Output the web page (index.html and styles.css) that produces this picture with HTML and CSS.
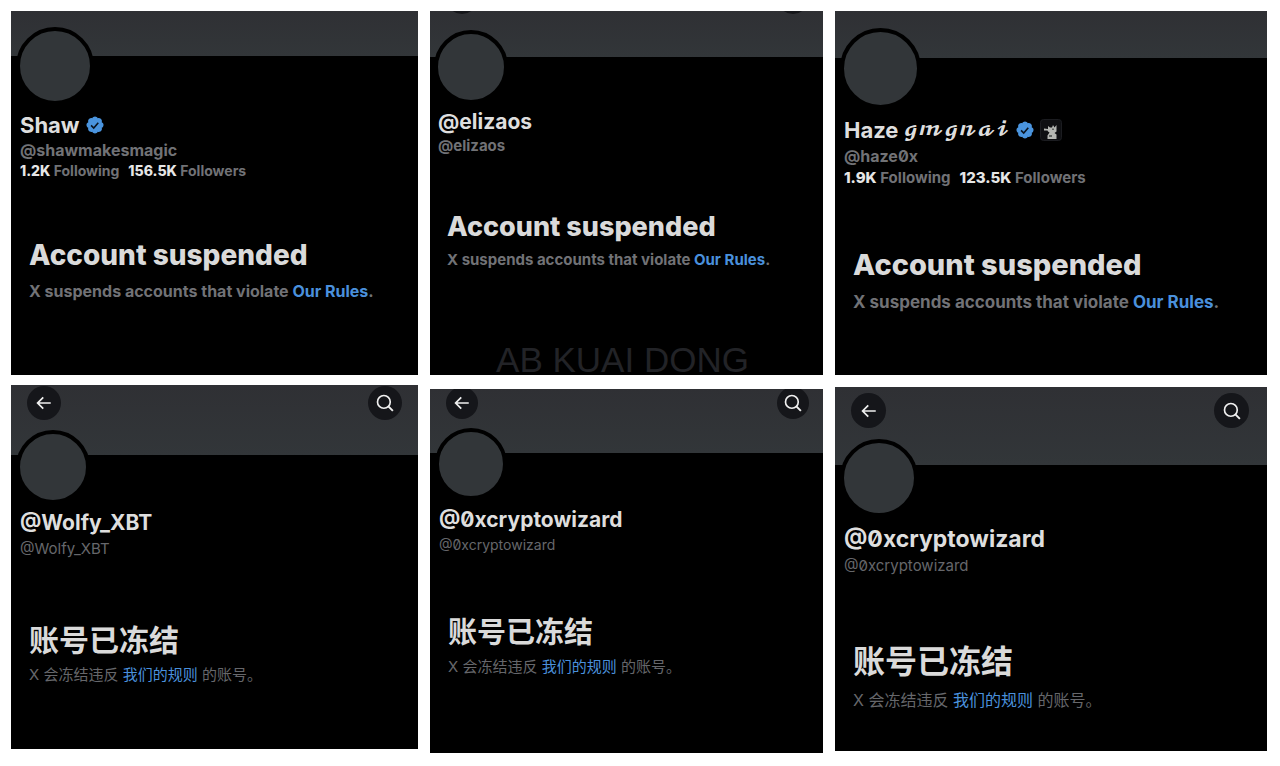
FILE: index.html
```html
<!DOCTYPE html>
<html lang="en">
<head>
<meta charset="utf-8">
<title>Suspended accounts</title>
<link rel="stylesheet" href="styles.css">
</head>
<body>
<svg class="sprite" aria-hidden="true">
  <symbol id="back" viewBox="0 0 24 24"><path d="M21 12H4M11 4.500L3.500 12l7.500 7.500" fill="none" stroke="currentColor" stroke-width="2.300"/></symbol>
  <symbol id="search" viewBox="0 0 24 24"><circle cx="10.500" cy="10.500" r="8.500" fill="none" stroke="currentColor" stroke-width="2.200"/><path d="M16.500 16.500L22.500 22.500" fill="none" stroke="currentColor" stroke-width="2.600"/></symbol>
  <symbol id="verified" viewBox="0 0 22 22"><path fill="#4a94de" d="M20.396 11c-.018-.646-.215-1.275-.57-1.816-.354-.54-.852-.972-1.438-1.246.223-.607.27-1.264.14-1.897-.131-.634-.437-1.218-.882-1.687-.47-.445-1.053-.75-1.687-.882-.633-.13-1.290-.083-1.897.14-.273-.587-.704-1.086-1.245-1.440S11.647 1.620 11 1.604c-.646.017-1.273.213-1.813.568s-.969.854-1.240 1.440c-.608-.223-1.267-.272-1.902-.14-.635.130-1.220.436-1.690.882-.445.470-.749 1.055-.878 1.688-.130.633-.080 1.290.144 1.896-.587.274-1.087.705-1.443 1.245-.356.540-.555 1.170-.574 1.817.020.647.218 1.276.574 1.817.356.540.856.972 1.443 1.245-.224.606-.274 1.263-.144 1.896.130.634.433 1.218.877 1.688.470.443 1.054.747 1.687.878.633.132 1.290.084 1.897-.136.274.586.705 1.084 1.246 1.439.540.354 1.170.551 1.816.569.647-.016 1.276-.213 1.817-.567s.972-.854 1.245-1.440c.604.239 1.266.296 1.903.164.636-.132 1.220-.447 1.680-.907.460-.460.776-1.044.908-1.681s.075-1.299-.165-1.903c.586-.274 1.084-.705 1.439-1.246.354-.540.551-1.170.569-1.816z"/><path fill="none" stroke="#0a1420" stroke-width="1.800" d="M6.700 11.400l2.900 2.900 5-5.700"/></symbol>
  <symbol id="affiliate" viewBox="0 0 22 22"><rect x=".5" y=".5" width="21" height="21" rx="3" fill="#0e0f12" stroke="#1b1c20"/><path fill="#b4b6b2" d="M4 9.500l4 .5V7l2 1.500h2l1-2.500 1.500 2.500L16.500 6v6.500l-2 1.500 2 1.500V20h-9v-3.500l2-3-1.500-1-.5-1H4z"/><path fill="#5e6260" d="M9 16h3v2H9zM12 9.500h2v1.500h-2z"/></symbol>
</svg>
<main class="board">
  <div class="column column-one">
    <article class="card shaw">
      <header class="banner"></header>
      <div class="profile">
        <div class="avatar"></div>
        <h2 class="name">Shaw <svg class="badge" role="img" aria-label="Verified"><use href="#verified"/></svg></h2>
        <p class="handle">@shawmakesmagic</p>
        <p class="stats"><span><b>1.2K</b> Following</span><span><b>156.5K</b> Followers</span></p>
        <section class="notice">
          <h3 class="title">Account suspended</h3>
          <p class="reason">X suspends accounts that violate <a href="#rules">Our Rules</a>.</p>
        </section>
      </div>
    </article>
    <article class="card wolfy zh">
      <header class="banner">
        <button class="tool" aria-label="Back"><svg><use href="#back"/></svg></button>
        <button class="tool" aria-label="Search"><svg><use href="#search"/></svg></button>
      </header>
      <div class="profile">
        <div class="avatar"></div>
        <h2 class="name">@Wolfy_XBT</h2>
        <p class="handle">@Wolfy_XBT</p>
        <section class="notice" lang="zh-CN">
          <h3 class="title">账号已冻结</h3>
          <p class="reason">X 会冻结违反 <a href="#rules">我们的规则</a> 的账号。</p>
        </section>
      </div>
    </article>
  </div>
  <div class="column column-two">
    <article class="card eliza">
      <header class="banner">
        <button class="tool" aria-label="Back"><svg><use href="#back"/></svg></button>
        <button class="tool" aria-label="Search"><svg><use href="#search"/></svg></button>
      </header>
      <div class="profile">
        <div class="avatar"></div>
        <h2 class="name">@elizaos</h2>
        <p class="handle">@elizaos</p>
        <section class="notice">
          <h3 class="title">Account suspended</h3>
          <p class="reason">X suspends accounts that violate <a href="#rules">Our Rules</a>.</p>
        </section>
      </div>
      <p class="watermark">AB KUAI DONG</p>
    </article>
    <article class="card wizard zh">
      <header class="banner">
        <button class="tool" aria-label="Back"><svg><use href="#back"/></svg></button>
        <button class="tool" aria-label="Search"><svg><use href="#search"/></svg></button>
      </header>
      <div class="profile">
        <div class="avatar"></div>
        <h2 class="name">@0xcryptowizard</h2>
        <p class="handle">@0xcryptowizard</p>
        <section class="notice" lang="zh-CN">
          <h3 class="title">账号已冻结</h3>
          <p class="reason">X 会冻结违反 <a href="#rules">我们的规则</a> 的账号。</p>
        </section>
      </div>
    </article>
  </div>
  <div class="column column-three">
    <article class="card haze">
      <header class="banner"></header>
      <div class="profile">
        <div class="avatar"></div>
        <h2 class="name">Haze <span class="script">𝓰𝓶𝓰𝓷𝓪𝓲</span> <svg class="badge" role="img" aria-label="Verified"><use href="#verified"/></svg><svg class="affiliate" role="img" aria-label="Affiliate"><use href="#affiliate"/></svg></h2>
        <p class="handle">@haze0x</p>
        <p class="stats"><span><b>1.9K</b> Following</span><span><b>123.5K</b> Followers</span></p>
        <section class="notice">
          <h3 class="title">Account suspended</h3>
          <p class="reason">X suspends accounts that violate <a href="#rules">Our Rules</a>.</p>
        </section>
      </div>
    </article>
    <article class="card wizard-large zh">
      <header class="banner">
        <button class="tool" aria-label="Back"><svg><use href="#back"/></svg></button>
        <button class="tool" aria-label="Search"><svg><use href="#search"/></svg></button>
      </header>
      <div class="profile">
        <div class="avatar"></div>
        <h2 class="name">@0xcryptowizard</h2>
        <p class="handle">@0xcryptowizard</p>
        <section class="notice" lang="zh-CN">
          <h3 class="title">账号已冻结</h3>
          <p class="reason">X 会冻结违反 <a href="#rules">我们的规则</a> 的账号。</p>
        </section>
      </div>
    </article>
  </div>
</main>
</body>
</html>
```
FILE: styles.css
```css
* { box-sizing: border-box; }
body {
  margin: 0;
  background: #fff;
  font-family: Inter, "Noto Sans CJK SC", sans-serif;
  font-feature-settings: "zero";
}
h2, h3, p { margin: 0; }
.sprite { display: none; }

.board { display: flex; gap: 12px; padding: 11px 13px 13px 11px; }
.column { display: flex; flex-direction: column; min-width: 0; }
.column-one { flex: 407 1 0; gap: 10px; }
.column-two { flex: 393 1 0; gap: 14px; }
.column-three { flex: 432 1 0; gap: 12px; }

.card {
  --avatar: 66px;
  --overlap: 26px;
  --inset: 9px;
  --name-size: 21px;
  --handle-size: 15px;
  --reason-size: 15px;
  --stats-size: 14px;
  --title-size: 30px;
  --name-gap: 6px;
  --handle-gap: 1px;
  --stats-gap: 1px;
  --notice-gap: 56px;
  --reason-gap: 8px;
  --banner: 46px;
  --tool: 34px;
  --tool-top: 1px;
  display: flex;
  flex-direction: column;
  min-height: 364px;
  background: #000;
}
.banner {
  display: flex;
  justify-content: space-between;
  align-items: flex-start;
  height: var(--banner);
  padding: 0 16px;
  background: linear-gradient(#2f3034, #323639);
  overflow: hidden;
}
.tool {
  display: grid;
  place-items: center;
  width: var(--tool);
  height: var(--tool);
  margin-top: var(--tool-top);
  padding: 0;
  border: 0;
  border-radius: 50%;
  background: #15161a;
  color: #f0f0f0;
}
.tool svg { width: 18px; height: 18px; }

.profile { padding: 0 var(--inset); color: #717276; font-weight: 700; }
.avatar {
  box-sizing: content-box;
  width: var(--avatar);
  height: var(--avatar);
  margin: calc(0px - var(--overlap)) 0 0 -4px;
  border: 4px solid #000;
  border-radius: 50%;
  background: #323639;
}
.name {
  display: flex;
  align-items: center;
  gap: 5px;
  margin-top: var(--name-gap);
  font-size: var(--name-size);
  font-weight: 700;
  line-height: 28px;
  color: #dedede;
}
.script { font-family: "DejaVu Math TeX Gyre", "DejaVu Serif", serif; font-size: 19px; font-weight: 400; }
.badge { width: 20px; height: 20px; }
.affiliate { width: 22px; height: 22px; }
.handle { margin-top: var(--handle-gap); font-size: var(--handle-size); line-height: 20px; }
.stats {
  display: flex;
  gap: 9px;
  margin-top: var(--stats-gap);
  font-size: var(--stats-size);
  line-height: 20px;
}
.stats b { color: #e6e6e6; font-weight: 800; }
.notice { margin-top: var(--notice-gap); padding: 0 9px; }
.title { font-size: var(--title-size); font-weight: 800; line-height: 36px; color: #dadada; }
.reason { margin-top: var(--reason-gap); font-size: var(--reason-size); line-height: 20px; }
.reason a { color: #4a90dc; text-decoration: none; }

.zh .handle, .zh .reason { font-weight: 400; color: #66676b; }
.zh .title { font-weight: 700; }

.watermark {
  margin: auto 8px 0 0;
  font-family: "Liberation Sans", Arial, sans-serif;
  font-size: 35px;
  line-height: 30px;
  text-align: center;
  color: #222327;
}

.shaw {
  --banner: 45px; --avatar: 70px; --overlap: 29px;
  --name-size: 22px; --handle-size: 16px; --reason-size: 16px; --title-size: 28px;
}
.eliza {
  --overlap: 27px; --inset: 8px; --tool: 32px; --tool-top: -29px; --title-size: 27px;
  --name-gap: 4px; --handle-gap: 0px; --notice-gap: 53px; --reason-gap: 5px;
}
.haze {
  --banner: 47px; --avatar: 73px; --overlap: 30px;
  --name-size: 22px; --handle-size: 16px; --reason-size: 17px; --stats-size: 15px; --title-size: 29px;
  --name-gap: 7px; --handle-gap: 2px; --stats-gap: 2px; --notice-gap: 59px; --reason-gap: 9px;
}
.wolfy {
  --banner: 70px; --overlap: 25px;
  --name-gap: 5px; --handle-gap: 2px; --notice-gap: 63px; --reason-gap: 7px;
}
.wizard {
  --banner: 64px; --avatar: 64px; --overlap: 25px; --tool: 32px; --tool-top: -2px;
  --handle-size: 14px; --title-size: 29px; --notice-gap: 60px; --reason-gap: 6px;
}
.column-two .banner { padding-right: 14px; }
.wizard-large {
  --banner: 78px; --avatar: 70px; --tool: 35px; --tool-top: 6px;
  --name-size: 23px; --handle-size: 15px; --reason-size: 16px; --title-size: 32px;
  --name-gap: 8px; --handle-gap: 3px; --notice-gap: 68px; --reason-gap: 10px;
}
.wizard-large .banner { padding-right: 18px; }
```
